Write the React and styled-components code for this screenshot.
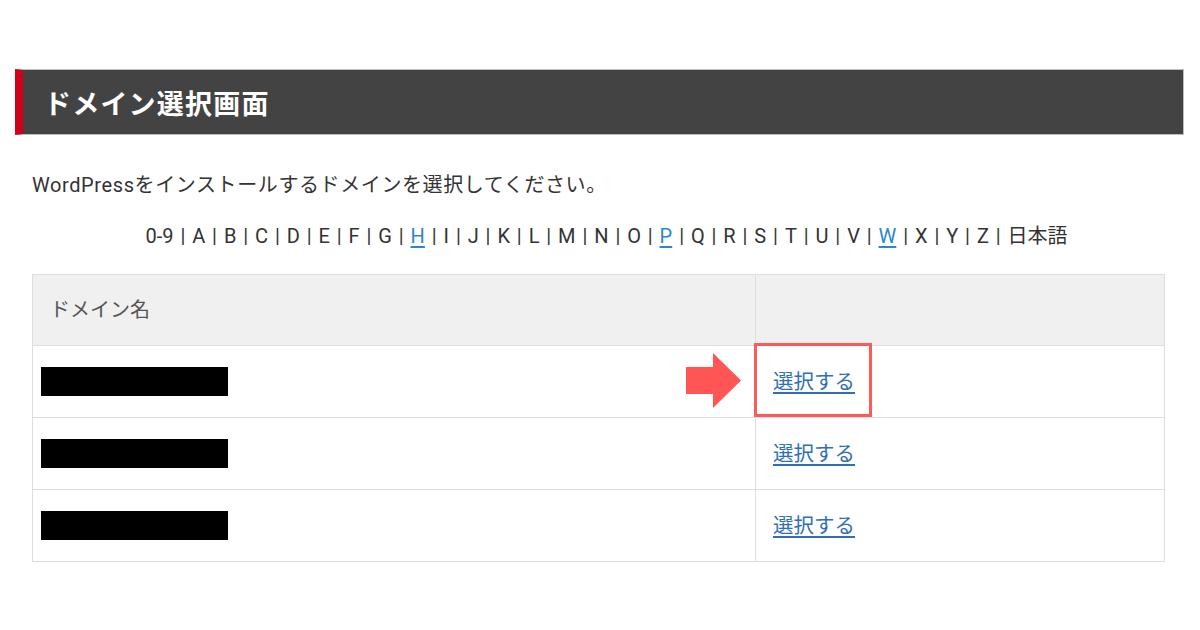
import React from "react";
import styled, { createGlobalStyle } from "styled-components";

const Global = createGlobalStyle`
  html, body { margin: 0; padding: 0; background: #fff; }
  body { font-family: Roboto, "Noto Sans CJK JP", sans-serif; color: #333; }
`;

const Page = styled.div`
  width: 1200px;
  height: 630px;
  padding-top: 69px;
  box-sizing: border-box;
  overflow: hidden;
`;

const TitleBar = styled.div`
  margin: 0 16px 0 15px;
  height: 66px;
  box-sizing: border-box;
  background: #434343;
  border: 1px solid #bdbdbd;
  border-left: 8px solid #d0021b;
  display: flex;
  align-items: center;
  padding-left: 21px;
`;

const Title = styled.h1`
  margin: 0;
  font-family: "Noto Sans CJK JP", sans-serif;
  font-size: 27px;
  font-weight: 700;
  color: #fff;
  line-height: 1;
  letter-spacing: 1.2px;
`;

const Content = styled.div`
  padding: 0 35px 0 32px;
`;

const Lead = styled.p`
  margin: 38px 0 0;
  font-size: 20px;
  line-height: 24px;
  letter-spacing: 0.6px;
  color: #333;
`;

const Index = styled.div`
  margin-top: 27px;
  padding-left: 16px;
  text-align: center;
  font-size: 20px;
  line-height: 24px;
  color: #333;
  white-space: nowrap;
`;

const Sep = styled.span`
  margin: 0 6.9px;
`;

const IndexLink = styled.a`
  color: #2a87d0;
  text-decoration: underline;
  text-underline-offset: 3px;
`;

const Table = styled.table`
  margin-top: 26px;
  width: 1133px;
  border-collapse: collapse;
  table-layout: fixed;
`;

const HeadCell = styled.th`
  height: 71px;
  background: #f0f0f0;
  border: 1px solid #dedede;
  text-align: left;
  font-weight: 400;
  font-size: 20px;
  color: #555;
  padding: 0 0 4px ${(p) => p.$pad}px;
  width: ${(p) => (p.$w ? `${p.$w}px` : "auto")};
  box-sizing: border-box;
`;

const Cell = styled.td`
  position: relative;
  height: 72px;
  border: 1px solid #dedede;
  padding: 0 0 ${(p) => p.$bottom || 0}px ${(p) => p.$pad}px;
  vertical-align: middle;
  box-sizing: border-box;
`;

const Redacted = styled.div`
  width: 187px;
  height: 29px;
  background: #000;
`;

const SelectLink = styled.a`
  font-size: 20.5px;
  color: #2f6fb7;
  text-decoration: underline;
  text-underline-offset: 3px;
  font-family: "Noto Sans CJK JP", sans-serif;
`;

const Highlight = styled.div`
  position: absolute;
  left: -2px;
  top: -3px;
  width: 118px;
  height: 74px;
  box-sizing: border-box;
  border: 3px solid #ff5a5a;
  pointer-events: none;
`;

const Arrow = styled.svg`
  position: absolute;
  left: -70px;
  top: 7px;
`;

const letters = [
  "0-9", "A", "B", "C", "D", "E", "F", "G", "H", "I", "J", "K", "L", "M",
  "N", "O", "P", "Q", "R", "S", "T", "U", "V", "W", "X", "Y", "Z", "日本語",
];
const linked = new Set(["H", "P", "W"]);

export default function App() {
  return (
    <Page>
      <Global />
      <TitleBar>
        <Title>ドメイン選択画面</Title>
      </TitleBar>
      <Content>
        <Lead>WordPressをインストールするドメインを選択してください。</Lead>
        <Index>
          {letters.map((l, i) => (
            <React.Fragment key={l}>
              {i > 0 && <Sep>|</Sep>}
              {linked.has(l) ? <IndexLink href="#">{l}</IndexLink> : <span>{l}</span>}
            </React.Fragment>
          ))}
        </Index>
        <Table>
          <thead>
            <tr>
              <HeadCell $pad={17} $w={723}>ドメイン名</HeadCell>
              <HeadCell $pad={17}></HeadCell>
            </tr>
          </thead>
          <tbody>
            {[0, 1, 2].map((i) => (
              <tr key={i}>
                <Cell $pad={8}>
                  <Redacted />
                </Cell>
                <Cell $pad={17} $bottom={3}>
                  <SelectLink href="#">選択する</SelectLink>
                  {i === 0 && (
                    <>
                      <Highlight />
                      <Arrow width="55" height="55" viewBox="0 0 55 55">
                        <polygon
                          points="0,14 27,14 27,0 55,27.5 27,55 27,41 0,41"
                          fill="#ff5555"
                        />
                      </Arrow>
                    </>
                  )}
                </Cell>
              </tr>
            ))}
          </tbody>
        </Table>
      </Content>
    </Page>
  );
}
